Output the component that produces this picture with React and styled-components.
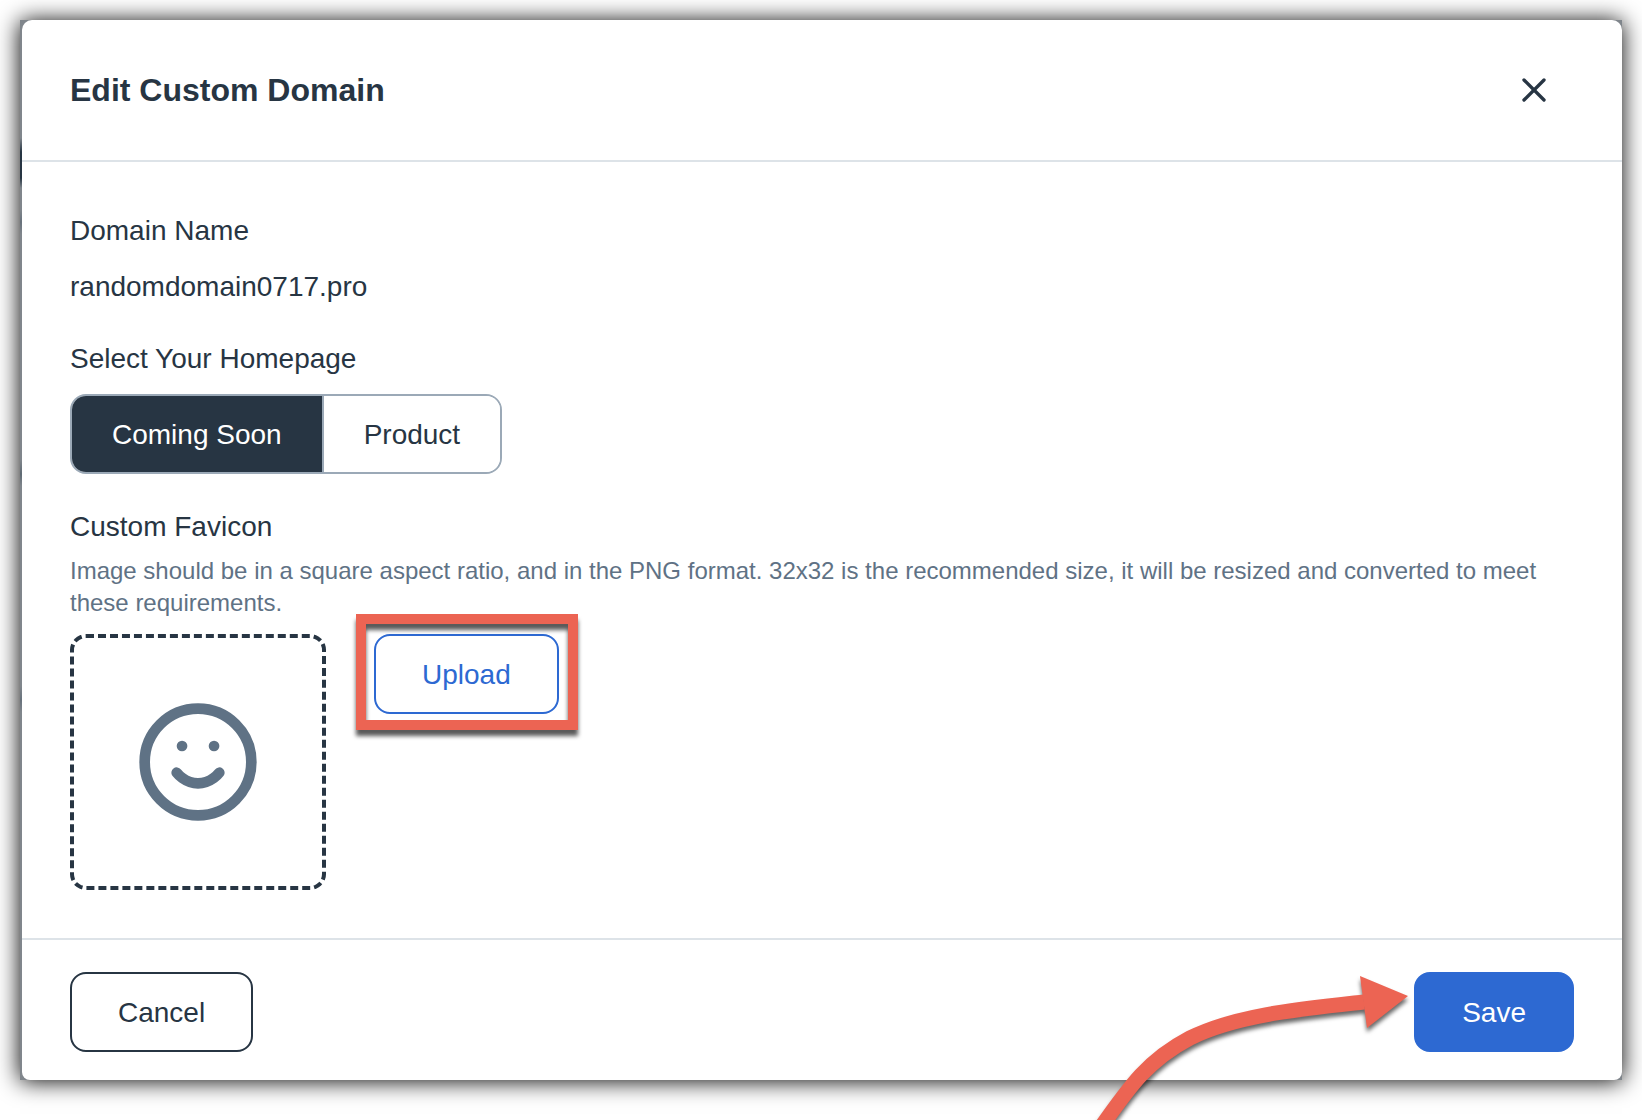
import { useState } from 'react'
import styled, { createGlobalStyle } from 'styled-components'
import { Smile, X } from 'lucide-react'

const GlobalStyle = createGlobalStyle`
    *, *::before, *::after {
        box-sizing: border-box;
    }
    body {
        margin: 0;
        background-color: white;
        color: #273543;
        font-family: "Liberation Sans", Arial, Helvetica, sans-serif;
        font-size: 28px;
        line-height: 40px;
    }
    button {
        font: inherit;
        cursor: pointer;
    }
`;
const Page = styled.main`
    min-height: 100vh;
    padding: 20px 20px 40px;
    overflow: hidden;
`;
/* the dimmed page shows as a thin strip left of the modal */
const Backdrop = styled.div`
    padding-left: 2px;
    background: linear-gradient(
        #80868c 118px, #273543 132px, #273543 158px, #80868c 168px,
        #80868c 190px, #68727c 202px, #80868c 214px,
        #80868c 440px, #5f6a74 454px, #80868c 466px,
        #80868c 666px, #68727c 680px, #80868c 692px
    ) left / 2px 100% no-repeat #80868c;
    box-shadow: 0 1px 22px black;
`;
const Modal = styled.section`
    background-color: white;
    border-radius: 10px 10px 8px 8px;
`;
const Header = styled.header`
    display: flex;
    align-items: center;
    justify-content: space-between;
    padding: 40px 68px 40px 48px;
    border-bottom: 2px solid #dde3e8;
`;
const Title = styled.h1`
    margin: 0;
    font-size: 32px;
    line-height: 60px;
    font-weight: bold;
`;
const CloseButton = styled.button`
    display: flex;
    padding: 0;
    border: none;
    background: none;
    color: #273543;
`;
const Body = styled.div`
    padding: 49px 48px 48px;
`;
const Field = styled.div`
    margin-bottom: ${props => props.$gap}px;
`;
const Label = styled.div`
    margin-bottom: ${props => props.$gap}px;
`;
const Toggle = styled.div`
    display: inline-flex;
    border: 2px solid #9ba9b7;
    border-radius: 16px;
    overflow: hidden;
    vertical-align: top;
`;
const ToggleButton = styled.button`
    padding: 19px 40px 17px;
    border: none;
    background-color: ${props => props.$active ? "#273543" : "white"};
    color: ${props => props.$active ? "white" : "#273543"};

    & + & {
        border-left: 2px solid #9ba9b7;
    }
`;
const Help = styled.p`
    margin: 0 0 15px;
    color: #5f7285;
    font-size: 24px;
    line-height: 32px;
`;
const FaviconRow = styled.div`
    display: flex;
    align-items: flex-start;
    gap: 48px;
`;
const Preview = styled.div`
    display: flex;
    align-items: center;
    justify-content: center;
    width: 256px;
    height: 256px;
    border: 4px dashed #273543;
    border-radius: 16px;
    color: #5f7285;
`;
const Button = styled.button`
    padding: 19px 46px 17px;
    border: 2px solid ${props => props.$color};
    border-radius: 16px;
    background-color: ${props => props.$filled ? props.$color : "white"};
    color: ${props => props.$filled ? "white" : props.$color};
`;
const Highlighted = styled.div`
    position: relative;
`;
const Highlight = styled.span`
    position: absolute;
    inset: -20px -19px -16px -18px;
    border: 10px solid #ec6453;
    filter: drop-shadow(0 6px 2px rgba(0, 0, 0, 0.65));
    pointer-events: none;
`;
const Footer = styled.footer`
    position: relative;
    display: flex;
    justify-content: space-between;
    padding: 32px 48px 28px;
    border-top: 2px solid #dde3e8;
`;
const Arrow = styled.svg`
    position: absolute;
    top: 20px;
    right: 202px;
    filter: drop-shadow(0 4px 2px rgba(0, 0, 0, 0.6));
    pointer-events: none;
`;

const pages = ["Coming Soon", "Product"];

const App = () => {
  const [homepage, setHomepage] = useState("Coming Soon");

  return (
    <Page>
        <GlobalStyle />
        <Backdrop>
            <Modal role="dialog" aria-labelledby="title">
                <Header>
                    <Title id="title">Edit Custom Domain</Title>
                    <CloseButton aria-label="Close">
                        <X size={40} />
                    </CloseButton>
                </Header>
                <Body>
                    <Field $gap={32}>
                        <Label $gap={16}>Domain Name</Label>
                        <div>randomdomain0717.pro</div>
                    </Field>
                    <Field $gap={33}>
                        <Label $gap={15} id="homepage">Select Your Homepage</Label>
                        <Toggle role="group" aria-labelledby="homepage">
                            {pages.map(page => (
                                <ToggleButton
                                    key={page}
                                    $active={page === homepage}
                                    aria-pressed={page === homepage}
                                    onClick={() => setHomepage(page)}
                                >
                                    {page}
                                </ToggleButton>
                            ))}
                        </Toggle>
                    </Field>
                    <Label $gap={8}>Custom Favicon</Label>
                    <Help>
                        Image should be in a square aspect ratio, and in the PNG format. 32x32 is the recommended size, it will be resized and converted to meet these requirements.
                    </Help>
                    <FaviconRow>
                        <Preview>
                            <Smile size={128} />
                        </Preview>
                        <Highlighted>
                            <Button $color="#2d69d2">Upload</Button>
                            <Highlight />
                        </Highlighted>
                    </FaviconRow>
                </Body>
                <Footer>
                    <Button $color="#273543">Cancel</Button>
                    <Button $color="#2d69d2" $filled>Save</Button>
                    <Arrow width="340" height="170" viewBox="1080 960 340 170" aria-hidden="true">
                        <path d="M1099 1130C1130 1086 1148 1060 1190 1038C1236 1015 1300 1009 1364 1002" fill="none" stroke="#ec6453" strokeWidth="15" />
                        <path d="M1360 976L1408 996L1367 1028Z" fill="#ec6453" />
                    </Arrow>
                </Footer>
            </Modal>
        </Backdrop>
    </Page>
  )
}

export default App
